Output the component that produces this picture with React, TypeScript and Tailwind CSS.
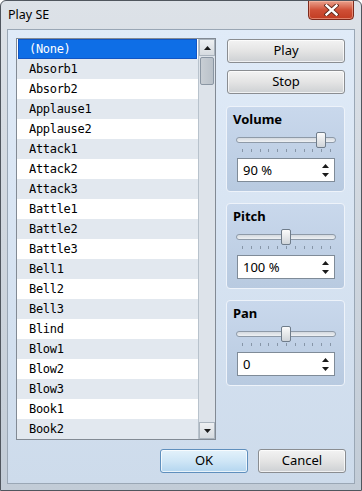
import React from "react";

const items = [
  "(None)", "Absorb1", "Absorb2", "Applause1", "Applause2", "Attack1", "Attack2", "Attack3",
  "Battle1", "Battle2", "Battle3", "Bell1", "Bell2", "Bell3", "Blind", "Blow1", "Blow2", "Blow3",
  "Book1", "Book2",
];

const ui = { fontFamily: '"Noto Sans", "Open Sans", sans-serif' };
const mono = { fontFamily: '"DejaVu Sans Mono", "Liberation Mono", monospace' };

function Triangle({ up }: { up?: boolean }) {
  return (
    <svg width="7" height="4" viewBox="0 0 7 4">
      {up ? <polygon points="0,4 7,4 3.5,0" fill="#1a1a1a" /> : <polygon points="0,0 7,0 3.5,4" fill="#1a1a1a" />}
    </svg>
  );
}

function Slider({ center }: { center: number }) {
  const ticks = Array.from({ length: 11 }, (_, i) => 6 + i * 8.8);
  return (
    <div className="relative ml-[9px] mt-[3px] h-[24px] w-[100px]">
      <div className="absolute left-0 top-[7px] h-[6px] w-[100px] rounded-[3px] border border-[#8e9aa8] bg-gradient-to-b from-[#d4d9df] to-[#eef1f4]" />
      {ticks.map((t, i) => (
        <div key={i} className="absolute top-[19px] h-[3px] w-px bg-[#8796a8]" style={{ left: Math.round(t) }} />
      ))}
      <div
        className="absolute top-[2px] h-[16px] w-[10px] rounded-[2px] border border-[#6f7c8a] bg-gradient-to-b from-[#fbfbfb] via-[#e6e8ea] to-[#cfd4d9]"
        style={{ left: center - 5 }}
      />
    </div>
  );
}

function Group({ label, value, center, first }: { label: string; value: string; center: number; first?: boolean }) {
  return (
    <div
      className={`${first ? "mt-[12px]" : "mt-[11px]"} flex h-[86px] w-[119px] flex-col rounded-[4px] border border-[#eef3fa] bg-gradient-to-b from-[#c9d8ec] to-[#b8cae0] pt-[4px]`}
    >
      <div className="ml-[6px] h-[16px] text-[13px] font-bold leading-[16px] text-black" style={ui}>
        {label}
      </div>
      <Slider center={center} />
      <div className="ml-[10px] mt-[4px] flex h-[24px] w-[98px] items-center justify-between border border-[#7f8b98] bg-white pl-[5px] pr-[5px]">
        <span className="text-[13px] leading-none text-black" style={ui}>
          {value}
        </span>
        <div className="flex flex-col gap-[5px]">
          <Triangle up />
          <Triangle />
        </div>
      </div>
    </div>
  );
}

function Button({ children, primary, className = "" }: { children: React.ReactNode; primary?: boolean; className?: string }) {
  return (
    <div
      className={`flex h-[24px] items-center justify-center rounded-[3px] border text-[13px] text-black ${
        primary
          ? "border-[#5f8fbd] bg-gradient-to-b from-[#e4f2fb] via-[#cfe6f6] to-[#b3d5ef]"
          : "border-[#8a8d91] bg-gradient-to-b from-[#f3f3f3] via-[#e4e4e4] to-[#cdd0d3]"
      } shadow-[inset_0_0_0_1px_rgba(255,255,255,0.7)] ${className}`}
      style={ui}
    >
      {children}
    </div>
  );
}

export default function App() {
  return (
    <div className="relative h-[491px] w-[362px] overflow-hidden rounded-t-[6px] border border-[#50565e] bg-gradient-to-b from-[#dde2e8] via-[#cfd6de] to-[#c2ccd7]">
      <div className="flex h-[28px] items-center pl-[7px] pt-[1px] text-[12.5px] text-black" style={ui}>
        Play SE
      </div>
      <div className="absolute right-[7px] top-[-1px] flex h-[20px] w-[46px] items-center justify-center rounded-b-[4px] border border-[#7d2a1c] bg-gradient-to-b from-[#e9a08c] via-[#cf4f36] to-[#c23c22] shadow-[inset_0_0_0_1px_rgba(255,200,180,0.5)]">
        <svg width="15" height="12" viewBox="0 0 15 12">
          <path d="M2.5 1.5 L12.5 10.5 M12.5 1.5 L2.5 10.5" stroke="#5a2418" strokeWidth="4.2" strokeLinecap="square" />
          <path d="M2.5 1.5 L12.5 10.5 M12.5 1.5 L2.5 10.5" stroke="#ffffff" strokeWidth="2.4" strokeLinecap="square" />
        </svg>
      </div>
      <div className="mx-[6px] flex h-[455px] flex-col border border-[#9aa7b5] bg-gradient-to-b from-[#e0ebf8] to-[#cddbeb] px-[8px] pt-[8px]">
        <div className="flex gap-[10px]">
          <div className="flex h-[402px] w-[200px] border border-[#828a94] bg-white">
            <div className="flex w-[181px] flex-col">
              {items.map((it, i) => (
                <div
                  key={it}
                  className={`flex h-[20px] items-center text-[12px] tracking-[-0.3px] ${
                    i === 0
                      ? "mx-[1px] border border-[#1155c4] bg-[#0e6ee6] pl-[10px] text-white"
                      : i % 2 === 1
                      ? "bg-[#e2e8ef] pl-[12px] text-black"
                      : "bg-white pl-[12px] text-black"
                  }`}
                  style={mono}
                >
                  {it}
                </div>
              ))}
            </div>
            <div className="flex w-[17px] flex-col border-l border-[#b8c2cc] bg-[#dde3ea]">
              <div className="flex h-[17px] items-center justify-center border border-[#aab4be] bg-gradient-to-b from-[#eef0f2] to-[#d6dbe0]">
                <Triangle up />
              </div>
              <div className="mx-[1px] mt-[1px] h-[28px] rounded-[2px] border border-[#8a96a3] bg-gradient-to-r from-[#c8ced4] to-[#b9c1c9]" />
              <div className="flex-1" />
              <div className="flex h-[17px] items-center justify-center border border-[#aab4be] bg-gradient-to-b from-[#eef0f2] to-[#d6dbe0]">
                <Triangle />
              </div>
            </div>
          </div>
          <div className="flex w-[119px] flex-col">
            <Button className="ml-[1px] mt-[1px]">Play</Button>
            <Button className="ml-[1px] mt-[7px]">Stop</Button>
            <Group label="Volume" value="90 %" center={85} first />
            <Group label="Pitch" value="100 %" center={50} />
            <Group label="Pan" value="0" center={50} />
          </div>
        </div>
        <div className="mt-[9px] flex justify-end gap-[10px]">
          <Button primary className="w-[88px]">OK</Button>
          <Button className="w-[88px]">Cancel</Button>
        </div>
      </div>
    </div>
  );
}
